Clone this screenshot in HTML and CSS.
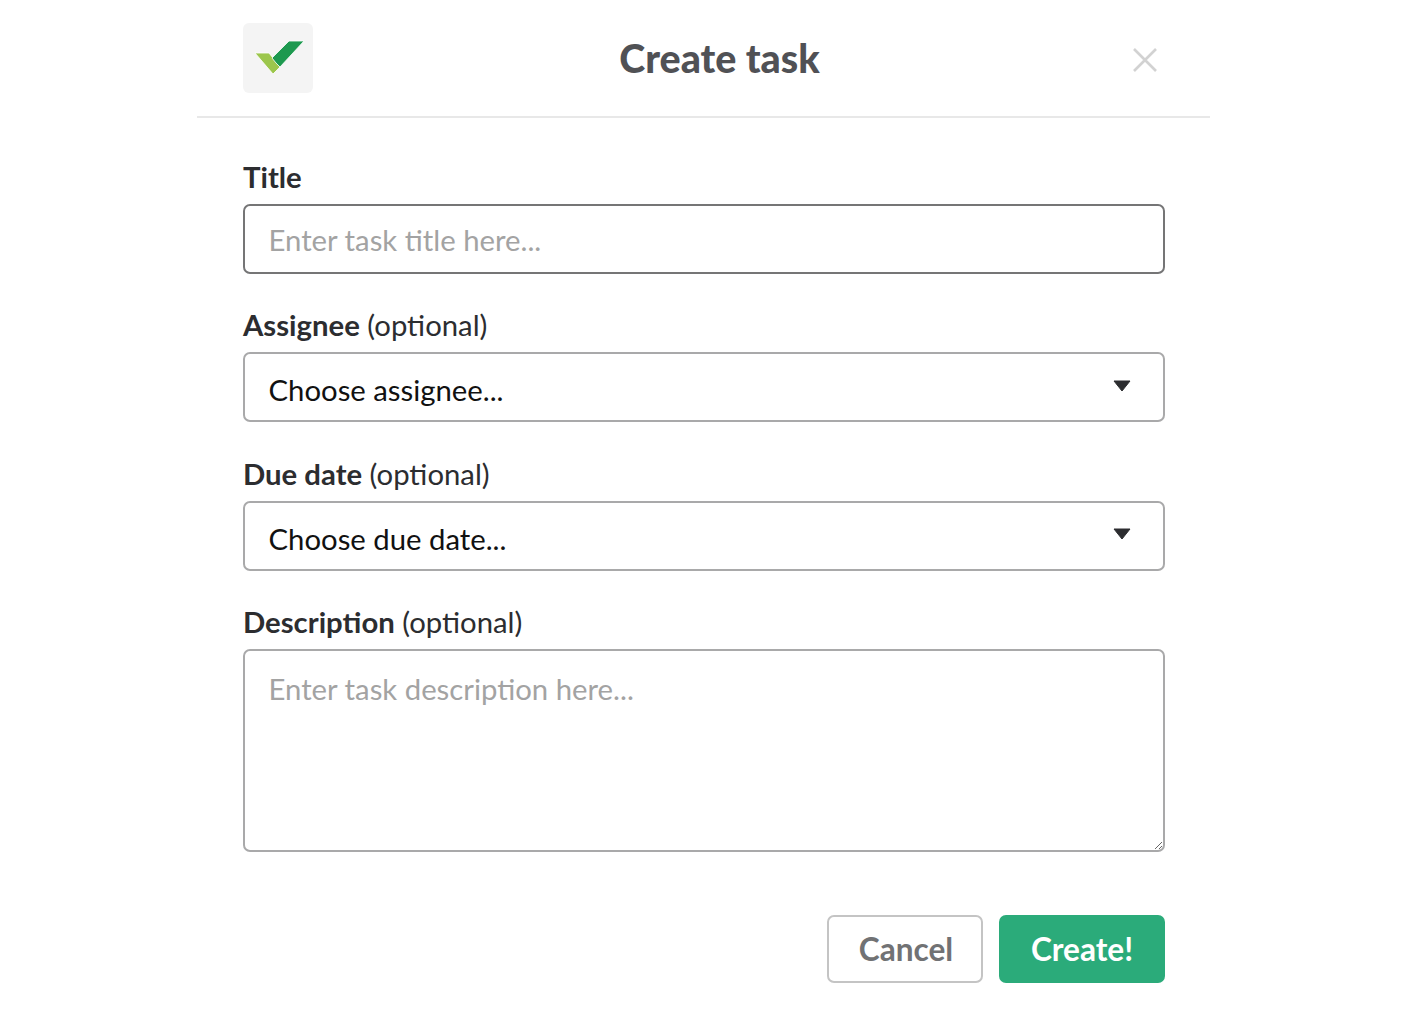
FILE: index.html
```html
<!DOCTYPE html>
<html lang="en">
<head>
<meta charset="utf-8">
<title>Create task</title>
<link rel="stylesheet" href="styles.css">
</head>
<body>
<div class="modal">
  <header class="head">
    <div class="logo">
      <svg width="70" height="70" viewBox="0 0 70 70">
        <path class="mark" d="M12 30H26L37 44L30 51Z" fill="#9cc64c"/>
        <path class="mark" d="M29 35L46 18H61L37 44L33 40Z" fill="#1d994f"/>
      </svg>
    </div>
    <h1 class="heading">Create task</h1>
    <svg class="close" width="28" height="28" viewBox="0 0 28 28"><path d="M3 3L25 25M25 3L3 25" stroke="#d2d2d2" stroke-width="2.600" fill="none"/></svg>
  </header>
  <form class="form">
    <label class="label"><b>Title</b></label>
    <input class="field" type="text" placeholder="Enter task title here...">
    <label class="label"><b>Assignee</b> (optional)</label>
    <div class="field select"><span>Choose assignee...</span><svg width="18" height="12" viewBox="0 0 18 12"><path d="M1 1H17L9 11Z" fill="#2c2d30" stroke="#2c2d30" stroke-width="1" stroke-linejoin="round"/></svg></div>
    <label class="label"><b>Due date</b> (optional)</label>
    <div class="field select"><span>Choose due date...</span><svg width="18" height="12" viewBox="0 0 18 12"><path d="M1 1H17L9 11Z" fill="#2c2d30" stroke="#2c2d30" stroke-width="1" stroke-linejoin="round"/></svg></div>
    <label class="label"><b>Description</b> (optional)</label>
    <textarea class="field area" placeholder="Enter task description here..."></textarea>
    <div class="actions">
      <button class="btn cancel" type="button">Cancel</button>
      <button class="btn create" type="button">Create!</button>
    </div>
  </form>
</div>
</body>
</html>
```
FILE: styles.css
```css
* { box-sizing: border-box; }
html, body { margin: 0; background: #fff; }
body { font-family: Lato, "Liberation Sans", sans-serif; color: #2c2d30; font-feature-settings: "liga" 1; }
.modal { width: 1013px; margin-left: 197px; }
.head {
  height: 118px; padding: 23px 51px 0 46px; border-bottom: 2px solid #e8e8e8;
  display: flex; align-items: flex-start;
}
.logo { width: 70px; height: 70px; background: #f4f4f4; border-radius: 6px; }
.logo svg { display: block; }
.mark { stroke: #fff; stroke-width: 0.8; }
.heading {
  flex: 1; margin: 0; text-align: center; font-size: 39.4px; line-height: 70px;
  font-weight: 900; color: #505155; padding-right: 5px;
}
.close { margin-top: 23px; }
.form { padding: 0 45px 0 46px; display: flex; flex-direction: column; }
.label { font-size: 29.3px; line-height: 36px; margin-top: 33.3px; height: 36px; color: #2c2d30; }
.label:first-child { margin-top: 41px; }
.label b { font-weight: 700; }
.field {
  width: 922px; height: 70px; margin-top: 9px; border: 2px solid #a9a9aa; border-radius: 7px;
  background: #fff; font: 400 29.3px/36px Lato, sans-serif; color: #111; padding: 0 24px; outline: 0;
}
input.field { border-color: #757576; padding: 1px 24px 0 23.5px; }
.field::placeholder { color: #a3a3a3; opacity: 1; }
.select { display: flex; align-items: center; justify-content: space-between; padding: 6px 32px 0 23.5px; }
.select svg { margin-top: -9px; }
.area { height: 203px; padding: 20px 24px 0 23.5px; display: block; resize: vertical; }
.actions { display: flex; justify-content: flex-end; gap: 16px; margin-top: 63px; }
.btn { height: 68px; border-radius: 7px; font: 700 31.6px/36px Lato, sans-serif; padding: 0; }
.cancel { width: 156px; background: #fff; border: 2px solid #c4c4c4; color: #717274; padding-left: 2px; }
.create { width: 166px; background: #2bab7a; border: 0; color: #fff; }
```
